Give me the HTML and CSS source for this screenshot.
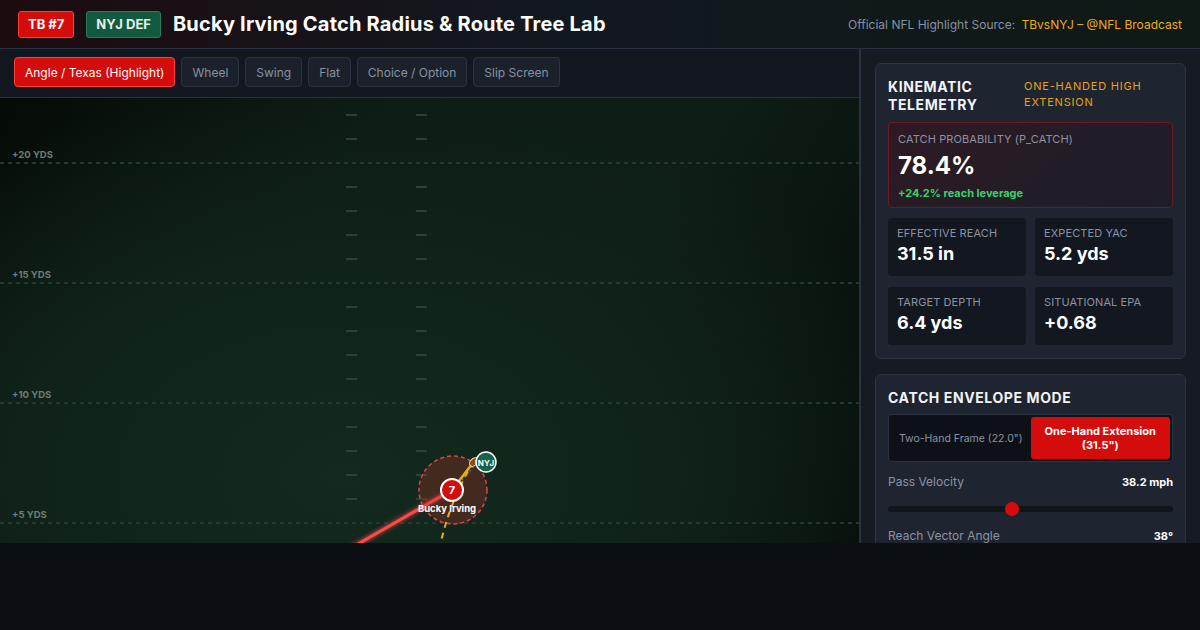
FILE: index.html
```html
<!DOCTYPE html>
<html lang="en">
<head>
<meta charset="UTF-8" />
<title>Bucky Irving Catch Radius &amp; Route Tree Lab</title>
<link rel="stylesheet" href="styles.css">
</head>
<body>

<div class="app">

	<header class="topbar">
		<div class="brand">
			<span class="badge badge-tb">TB #7</span>
			<span class="badge badge-nyj">NYJ DEF</span>
			<h1>Bucky Irving Catch Radius &amp; Route Tree Lab</h1>
		</div>
		<div class="source">Official NFL Highlight Source: <span class="source-link">TBvsNYJ – @NFL Broadcast</span></div>
	</header>

	<div class="main">

		<section class="stage">
			<nav class="routes">
				<button class="route active">Angle / Texas (Highlight)</button>
				<button class="route">Wheel</button>
				<button class="route">Swing</button>
				<button class="route">Flat</button>
				<button class="route">Choice / Option</button>
				<button class="route">Slip Screen</button>
			</nav>

			<div class="field">
				<svg class="field-svg" width="859" height="445" viewBox="0 0 859 445">
					<defs>
						<filter id="glow" x="-20%" y="-20%" width="140%" height="140%">
							<feGaussianBlur stdDeviation="2" result="b" />
							<feMerge><feMergeNode in="b" /><feMergeNode in="SourceGraphic" /></feMerge>
						</filter>
					</defs>

					<!-- yard lines -->
					<g class="yard-lines">
						<line x1="0" y1="65" x2="859" y2="65" />
						<line x1="0" y1="185" x2="859" y2="185" />
						<line x1="0" y1="305" x2="859" y2="305" />
						<line x1="0" y1="425" x2="859" y2="425" />
					</g>
					<g class="yard-labels">
						<text x="12" y="60">+20 YDS</text>
						<text x="12" y="180">+15 YDS</text>
						<text x="12" y="300">+10 YDS</text>
						<text x="12" y="420">+5 YDS</text>
					</g>

					<!-- hash marks -->
					<g class="hashes" id="hashes"></g>

					<!-- route + pass -->
					<line class="route-line" x1="250" y1="508" x2="452" y2="392" filter="url(#glow)" />
					<circle class="envelope" cx="453" cy="392" r="34" />
					<path class="pass-line" d="M437 462 Q447 407 473 365" />
					<line class="reach-line" x1="452" y1="392" x2="472" y2="366" />
					<line class="reach-dots" x1="462" y1="382" x2="474" y2="368" />
					<ellipse class="ball" cx="474" cy="364" rx="5" ry="3.5" transform="rotate(-40 474 364)" />

					<g class="defender">
						<circle cx="486" cy="364" r="10" />
						<text x="486" y="367.5">NYJ</text>
					</g>
					<g class="player">
						<circle cx="452" cy="392" r="11" />
						<text x="452" y="396">7</text>
					</g>
					<text class="player-name" x="447" y="414">Bucky Irving</text>
				</svg>
			</div>
		</section>

		<aside class="sidebar">

			<div class="card">
				<div class="card-head">
					<h2>Kinematic Telemetry</h2>
					<span class="tag">One-Handed High Extension</span>
				</div>

				<div class="prob">
					<div class="label">Catch Probability (P_Catch)</div>
					<div class="prob-value">78.4%</div>
					<div class="prob-delta">+24.2% reach leverage</div>
				</div>

				<div class="metrics">
					<div class="metric">
						<div class="label">Effective Reach</div>
						<div class="metric-value">31.5 in</div>
					</div>
					<div class="metric">
						<div class="label">Expected YAC</div>
						<div class="metric-value">5.2 yds</div>
					</div>
					<div class="metric">
						<div class="label">Target Depth</div>
						<div class="metric-value">6.4 yds</div>
					</div>
					<div class="metric">
						<div class="label">Situational EPA</div>
						<div class="metric-value">+0.68</div>
					</div>
				</div>
			</div>

			<div class="card">
				<h2>Catch Envelope Mode</h2>

				<div class="segment">
					<button class="seg">Two-Hand Frame (22.0")</button>
					<button class="seg active">One-Hand Extension (31.5")</button>
				</div>

				<div class="control">
					<div class="control-row"><span>Pass Velocity</span><strong>38.2 mph</strong></div>
					<div class="slider"><span class="thumb" style="left: 43.5%"></span></div>
				</div>
				<div class="control">
					<div class="control-row"><span>Reach Vector Angle</span><strong>38°</strong></div>
				</div>
			</div>

		</aside>
	</div>
</div>

<script>
(function()
{
	// hash marks, one per yard, skipped on the 5-yard lines
	var g = document.getElementById("hashes");
	var ns = "http://www.w3.org/2000/svg";
	for (var y = 17; y < 420; y += 24)
	{
		if ((y - 65) % 120 === 0) continue;
		[346, 416].forEach(function(x)
		{
			var r = document.createElementNS(ns, "rect");
			r.setAttribute("x", x);
			r.setAttribute("y", y - 1);
			r.setAttribute("width", 11);
			r.setAttribute("height", 2);
			g.appendChild(r);
		});
	}
})();
</script>
</body>
</html>
```

FILE: styles.css
```css
*
{
	box-sizing: border-box;
}

body
{
	margin: 0;
	background: #0b0e13;
	color: #e8ebf0;
	font-family: Inter, "Liberation Sans", sans-serif;
}

.app
{
	height: 543px;
	display: flex;
	flex-direction: column;
	overflow: hidden;
}

/* header */

.topbar
{
	height: 49px;
	flex: none;
	display: flex;
	align-items: center;
	justify-content: space-between;
	padding: 0 18px;
	background: linear-gradient(90deg, #1c0c10 0%, #131820 45%, #0d1a15 100%);
	border-bottom: 1px solid #2a3242;
}

.brand
{
	display: flex;
	align-items: center;
	gap: 12px;
}

.badge
{
	display: inline-block;
	height: 27px;
	line-height: 25px;
	padding: 0 9px;
	border-radius: 3px;
	font-weight: 700;
	font-size: 13px;
	color: #fff;
}

.badge-tb
{
	background: #d40c0c;
	border: 1px solid #ff3b3b;
}

.badge-nyj
{
	background: #125a3f;
	border: 1px solid #2e7a5a;
	color: #e6efe9;
}

h1
{
	margin: 0;
	font-size: 20px;
	font-weight: 700;
	color: #fff;
	letter-spacing: 0.2px;
}

.source
{
	font-size: 12px;
	color: #8891a0;
}

.source-link
{
	color: #f0aa1a;
	margin-left: 3px;
}

/* main */

.main
{
	flex: 1;
	display: flex;
	min-height: 0;
}

.stage
{
	flex: 1;
	display: flex;
	flex-direction: column;
	min-width: 0;
}

.routes
{
	height: 49px;
	flex: none;
	display: flex;
	align-items: center;
	gap: 6px;
	padding: 0 14px 2px 14px;
	background: #131820;
	border-bottom: 1px solid #2a3242;
}

.route
{
	height: 30px;
	padding: 0 10px;
	font-family: Inter, "Liberation Sans", sans-serif;
	font-size: 12px;
	color: #8891a0;
	background: #1b212b;
	border: 1px solid #2b3340;
	border-radius: 4px;
}

.route.active
{
	color: #fff;
	background: #d40c0c;
	border-color: #ff4040;
}

.field
{
	flex: 1;
	overflow: hidden;
	background:
		radial-gradient(ellipse 70% 90% at 40% 85%, #142a1e 0%, #10221a 55%, rgba(15,32,24,0) 100%),
		linear-gradient(120deg, #050b07 0%, #0d1c14 35%, #0e1e16 65%, #050b07 100%);
}

.field-svg
{
	display: block;
}

.yard-lines line
{
	stroke: #243a2d;
	stroke-width: 2;
	stroke-dasharray: 4 4;
}

.yard-labels text
{
	fill: #6f7b74;
	font-size: 9.5px;
	font-weight: 700;
	font-family: Inter, "Liberation Sans", sans-serif;
}

.hashes rect
{
	fill: #2c4236;
}

.route-line
{
	stroke: #ff4848;
	stroke-width: 3;
	stroke-linecap: round;
}

.envelope
{
	fill: rgba(190, 50, 40, 0.28);
	stroke: #e0434b;
	stroke-width: 1.5;
	stroke-dasharray: 4 3;
}

.pass-line
{
	fill: none;
	stroke: #f0aa1a;
	stroke-width: 2;
	stroke-dasharray: 6 5;
}

.reach-line
{
	stroke: #f0aa1a;
	stroke-width: 2.5;
}

.reach-dots
{
	stroke: #3ba56a;
	stroke-width: 1.5;
	stroke-dasharray: 1 3;
}

.ball
{
	fill: #8a4b1d;
	stroke: #f2e2c8;
	stroke-width: 1;
}

.defender circle
{
	fill: #17644a;
	stroke: #fff;
	stroke-width: 1.5;
}

.defender text
{
	fill: #fff;
	font-size: 8px;
	font-weight: 700;
	text-anchor: middle;
	font-family: Inter, "Liberation Sans", sans-serif;
}

.player circle
{
	fill: #d40c0c;
	stroke: #fff;
	stroke-width: 2;
}

.player text
{
	fill: #fff;
	font-size: 11px;
	font-weight: 700;
	text-anchor: middle;
	font-family: Inter, "Liberation Sans", sans-serif;
}

.player-name
{
	fill: #fff;
	font-size: 9.5px;
	font-weight: 700;
	text-anchor: middle;
	font-family: Inter, "Liberation Sans", sans-serif;
}

/* sidebar */

.sidebar
{
	width: 341px;
	flex: none;
	padding: 14px 14px 0 14px;
	background: #151a23;
	border-left: 2px solid #2a3242;
	display: flex;
	flex-direction: column;
	gap: 15px;
}

.card
{
	flex: none;
	padding: 13px 12px 13px 12px;
	background: #1e2430;
	border: 1px solid #2c3444;
	border-radius: 6px;
}

.card-head
{
	display: flex;
	justify-content: space-between;
	gap: 12px;
}

h2
{
	margin: 0;
	padding-top: 1px;
	font-size: 14px;
	font-weight: 700;
	letter-spacing: 0.6px;
	line-height: 18px;
	text-transform: uppercase;
	color: #f2f4f7;
}

.card-head h2
{
	flex: none;
	width: 110px;
}

.tag
{
	width: 149px;
	font-size: 11px;
	line-height: 16px;
	letter-spacing: 0.8px;
	text-transform: uppercase;
	color: #e6a21c;
	padding-top: 1px;
}

.label
{
	font-size: 11px;
	text-transform: uppercase;
	color: #8b93a3;
	letter-spacing: 0.1px;
}

.prob
{
	margin-top: 8px;
	height: 86px;
	padding: 9px 9px 0 9px;
	border: 1px solid #6e1a20;
	border-radius: 4px;
	background: linear-gradient(135deg, #2e1a22 0%, #241c26 50%, #1f1d27 100%);
}

.prob-value
{
	margin-top: 6px;
	font-size: 24px;
	font-weight: 700;
	color: #fff;
	line-height: 28px;
}

.prob-delta
{
	margin-top: 6px;
	font-size: 11px;
	font-weight: 700;
	color: #39d26a;
}

.metrics
{
	margin-top: 10px;
	display: grid;
	grid-template-columns: 1fr 1fr;
	gap: 11px 9px;
}

.metric
{
	height: 58px;
	padding: 8px 9px 0 9px;
	background: #121720;
	border-radius: 4px;
}

.metric-value
{
	margin-top: 3px;
	font-size: 18px;
	font-weight: 700;
	color: #fff;
}

.segment
{
	margin-top: 7px;
	display: flex;
	padding: 2px;
	background: #0d1117;
	border: 1px solid #2c3444;
	border-radius: 4px;
}

.seg
{
	flex: 1;
	height: 42px;
	padding: 0 6px;
	font-family: Inter, "Liberation Sans", sans-serif;
	font-size: 10.5px;
	color: #8b93a3;
	background: none;
	border: 0;
	border-radius: 3px;
}

.seg:first-child
{
	white-space: nowrap;
}

.seg.active
{
	color: #fff;
	font-weight: 700;
	font-size: 11px;
	background: #d40c0c;
}

.control
{
	margin-top: 12px;
}

.control + .control
{
	margin-top: 16px;
}

.control-row
{
	display: flex;
	justify-content: space-between;
	align-items: center;
	font-size: 12px;
	color: #8b93a3;
}

.control-row strong
{
	font-size: 11px;
	color: #fff;
}

.slider
{
	position: relative;
	margin-top: 17px;
	height: 6px;
	background: #10151c;
	border-radius: 3px;
}

.thumb
{
	position: absolute;
	top: -4px;
	width: 14px;
	height: 14px;
	margin-left: -7px;
	background: #d40c0c;
	border-radius: 50%;
}
```
